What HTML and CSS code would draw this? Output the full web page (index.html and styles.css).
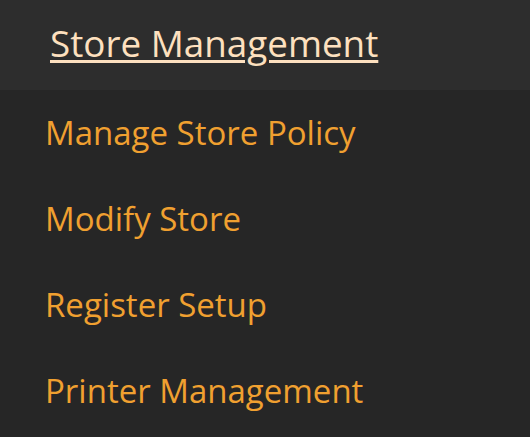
FILE: index.html
```html
<!DOCTYPE html>
<html lang="en">
<head>
<meta charset="utf-8">
<title>Store Management</title>
<link rel="stylesheet" href="styles.css">
</head>
<body>
<nav class="menu">
  <div class="menu-header"><a class="menu-title" href="#">Store Management</a></div>
  <ul class="menu-list">
    <li><a class="menu-item" href="#">Manage Store Policy</a></li>
    <li><a class="menu-item" href="#">Modify Store</a></li>
    <li><a class="menu-item" href="#">Register Setup</a></li>
    <li><a class="menu-item" href="#">Printer Management</a></li>
  </ul>
</nav>
</body>
</html>
```

FILE: styles.css
```css
html, body {
  margin: 0;
  padding: 0;
  background: #262626;
  font-family: "Open Sans", "Noto Sans", sans-serif;
}
.menu {
  display: flex;
  flex-direction: column;
}
.menu-header {
  background: #2d2d2d;
  height: 90px;
  box-sizing: border-box;
  padding: 13px 0 0 50px;
}
.menu-title {
  font-size: 36.8px;
  line-height: 60px;
  color: #fde0bf;
  text-decoration: underline;
  text-decoration-thickness: 3px;
  text-underline-offset: 3px;
}
.menu-list {
  list-style: none;
  margin: 0;
  padding: 0;
}
.menu-item {
  display: block;
  padding-left: 45px;
  font-size: 33px;
  line-height: 86px;
  color: #f0a030;
  text-decoration: none;
}
```
